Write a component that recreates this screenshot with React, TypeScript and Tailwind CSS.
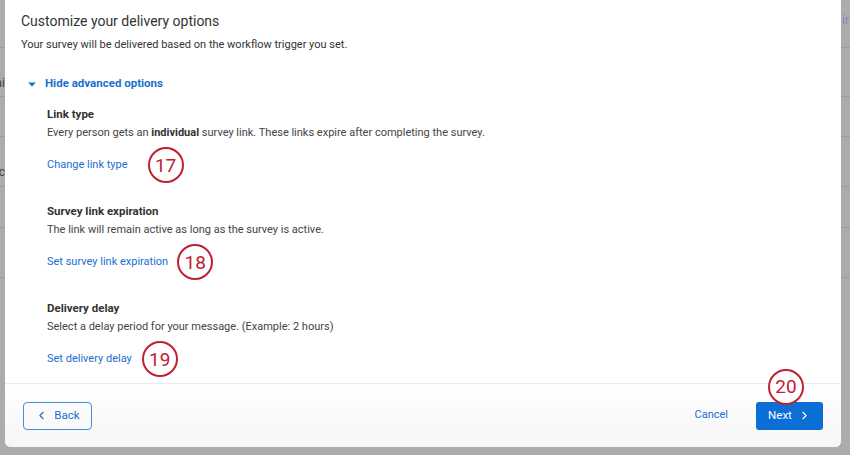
import { ChevronLeft, ChevronRight } from 'lucide-react';

function Callout({ n }: { n: number }) {
  return (
    <span className="flex h-[36px] w-[36px] shrink-0 items-center justify-center rounded-full border-[2.5px] border-[#c0202f] bg-white text-[19px] leading-none text-[#c0202f]">
      {n}
    </span>
  );
}

function Section({
  title,
  children,
  link,
  n,
  gap,
}: {
  title: string;
  children: React.ReactNode;
  link: string;
  n: number;
  gap: string;
}) {
  return (
    <div className="flex flex-col">
      <div className="text-[11.5px] font-bold leading-[17px] text-[#333]">{title}</div>
      <div className="mt-[1px] text-[11px] leading-[18px] text-[#444]">{children}</div>
      <div className={`mt-[5px] flex items-center ${gap}`}>
        <span className="text-[11px] text-[#1a6fd1]">{link}</span>
        <Callout n={n} />
      </div>
    </div>
  );
}

function SideLines() {
  return (
    <div className="flex h-full flex-col">
      <div className="h-[48px] border-b border-[#9c9c9c]" />
      <div className="h-[49px] border-b border-[#9c9c9c]" />
      <div className="h-[40px] border-b border-[#9c9c9c]" />
      <div className="h-[50px] border-b border-[#9c9c9c]" />
      <div className="h-[41px] border-b border-[#9c9c9c]" />
      <div className="h-[50px] border-b border-[#9c9c9c]" />
    </div>
  );
}

export default function App() {
  return (
    <div
      className="flex h-[455px] w-[850px] overflow-hidden bg-[#acacac]"
      style={{ fontFamily: 'Roboto, "Liberation Sans", sans-serif' }}
    >
      {/* backdrop, left edge */}
      <div className="relative w-[5px] shrink-0 overflow-hidden">
        <SideLines />
        <span className="absolute right-0 top-[74px] text-[12px] text-[#444]">ai</span>
        <span className="absolute right-0 top-[163px] text-[12px] text-[#444]">c</span>
      </div>

      {/* modal */}
      <div className="flex h-[447px] w-[836px] shrink-0 flex-col rounded-b-[6px] bg-white">
        <div className="flex flex-1 flex-col px-[16px] pt-[10px]">
          <h1 className="text-[14px] leading-[22px] text-[#333]">Customize your delivery options</h1>
          <p className="mt-[4px] text-[11px] leading-[18px] text-[#333]">
            Your survey will be delivered based on the workflow trigger you set.
          </p>

          <div className="mt-[21px] flex items-center">
            <svg width="12" height="8" viewBox="0 0 12 8" className="ml-[5px]">
              <path d="M2 2.5h8L6 6.5z" fill="#1a6fd1" />
            </svg>
            <span className="ml-[7px] text-[11.5px] font-bold text-[#1a6fd1]">Hide advanced options</span>
          </div>

          <div className="ml-[26px] mt-[14px] flex flex-col gap-[20px]">
            <Section title="Link type" link="Change link type" n={17} gap="gap-[20px]">
              Every person gets an <b className="font-bold text-[#333]">individual</b> survey link. These links expire
              after completing the survey.
            </Section>
            <Section title="Survey link expiration" link="Set survey link expiration" n={18} gap="gap-[9px]">
              The link will remain active as long as the survey is active.
            </Section>
            <Section title="Delivery delay" link="Set delivery delay" n={19} gap="gap-[10px]">
              Select a delay period for your message. (Example: 2 hours)
            </Section>
          </div>
        </div>

        <div className="flex h-[64px] items-center justify-between rounded-b-[6px] border-t border-[#ececec] bg-gradient-to-b from-white to-[#f6f6f6] px-[18px]">
          <button className="flex h-[28px] w-[69px] items-center justify-center gap-[6px] rounded-[4px] border border-[#4a8fdc] text-[11.5px] text-[#1a6fd1]">
            <ChevronLeft size={13} strokeWidth={2} />
            Back
          </button>
          <div className="flex items-center gap-[28px]">
            <span className="text-[11px] text-[#1a6fd1]">Cancel</span>
            <div className="relative">
              <div className="absolute left-[12px] top-[-33px]">
                <Callout n={20} />
              </div>
              <button className="flex h-[28px] w-[67px] items-center justify-center gap-[6px] rounded-[3px] bg-[#0b6fd6] text-[11.5px] text-white">
                Next
                <ChevronRight size={13} strokeWidth={2} />
              </button>
            </div>
          </div>
        </div>
      </div>

      {/* backdrop, right edge */}
      <div className="relative flex-1 overflow-hidden">
        <SideLines />
        <span className="absolute left-[1px] top-[11px] text-[12px] text-[#7a8fb0]">ir</span>
      </div>
    </div>
  );
}
